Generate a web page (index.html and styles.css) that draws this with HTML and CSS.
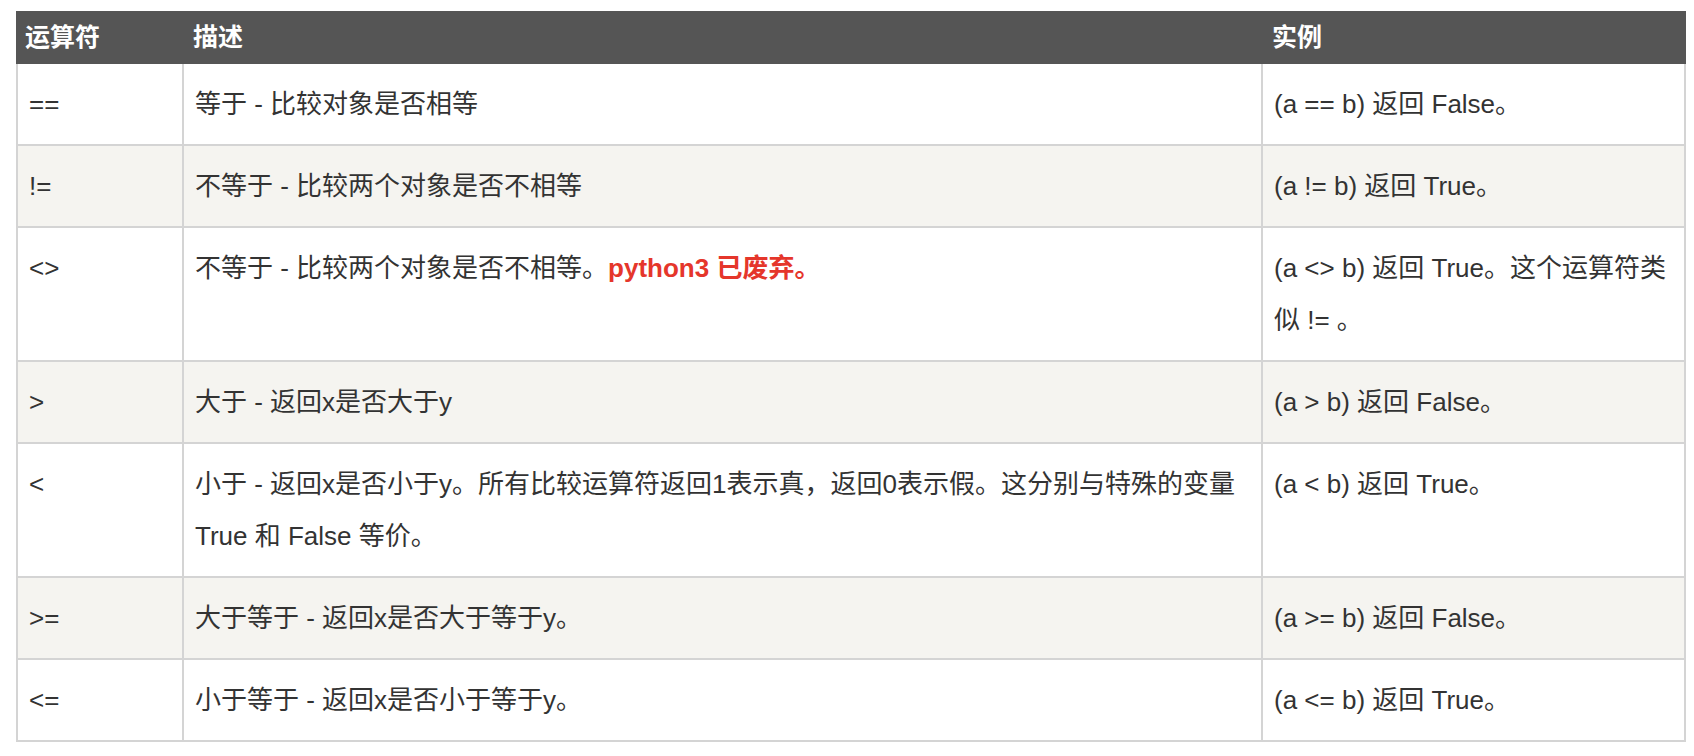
FILE: index.html
```html
<!DOCTYPE html>
<html lang="zh-CN">
<head>
<meta charset="utf-8">
<title>比较运算符</title>
<link rel="stylesheet" href="styles.css">
</head>
<body>
<table class="reference">
  <colgroup>
    <col class="c-op">
    <col class="c-desc">
    <col class="c-ex">
  </colgroup>
  <thead>
    <tr><th>运算符</th><th>描述</th><th>实例</th></tr>
  </thead>
  <tbody>
    <tr><td>==</td><td>等于 - 比较对象是否相等</td><td>(a == b) 返回 False。</td></tr>
    <tr><td>!=</td><td>不等于 - 比较两个对象是否不相等</td><td>(a != b) 返回 True。</td></tr>
    <tr><td>&lt;&gt;</td><td>不等于 - 比较两个对象是否不相等。<span class="warn">python3 已废弃。</span></td><td>(a &lt;&gt; b) 返回 True。这个运算符类似 != 。</td></tr>
    <tr><td>&gt;</td><td>大于 - 返回x是否大于y</td><td>(a &gt; b) 返回 False。</td></tr>
    <tr><td>&lt;</td><td>小于 - 返回x是否小于y。所有比较运算符返回1表示真，返回0表示假。这分别与特殊的变量 True 和 False 等价。</td><td>(a &lt; b) 返回 True。</td></tr>
    <tr><td>&gt;=</td><td>大于等于 - 返回x是否大于等于y。</td><td>(a &gt;= b) 返回 False。</td></tr>
    <tr><td>&lt;=</td><td>小于等于 - 返回x是否小于等于y。</td><td>(a &lt;= b) 返回 True。</td></tr>
  </tbody>
</table>
</body>
</html>
```
FILE: styles.css
```css
html, body {
  margin: 0;
  background: #ffffff;
}
body {
  padding: 11px 8px 0 16px;
  font-family: "Liberation Sans", "Noto Sans CJK SC", sans-serif;
  font-size: 26px;
  color: #333333;
}
.reference {
  width: 1670px;
  border-collapse: separate;
  border-spacing: 0;
  table-layout: fixed;
}
.c-op { width: 168px; }
.c-desc { width: 1079px; }
.c-ex { width: 423px; }
.reference th {
  background: #555555;
  color: #ffffff;
  font-weight: bold;
  font-size: 25px;
  text-align: left;
  line-height: 53px;
  padding: 0 9px;
  vertical-align: middle;
}
.reference td {
  padding: 14px 11px;
  line-height: 52px;
  vertical-align: top;
  text-align: left;
  border-right: 2px solid #d4d4d4;
  border-bottom: 2px solid #d4d4d4;
}
.reference td:first-child {
  border-left: 2px solid #d4d4d4;
}
.reference tbody tr:nth-child(even) td {
  background: #f5f4f0;
}
.warn {
  color: #e5362b;
  font-weight: bold;
}
```
